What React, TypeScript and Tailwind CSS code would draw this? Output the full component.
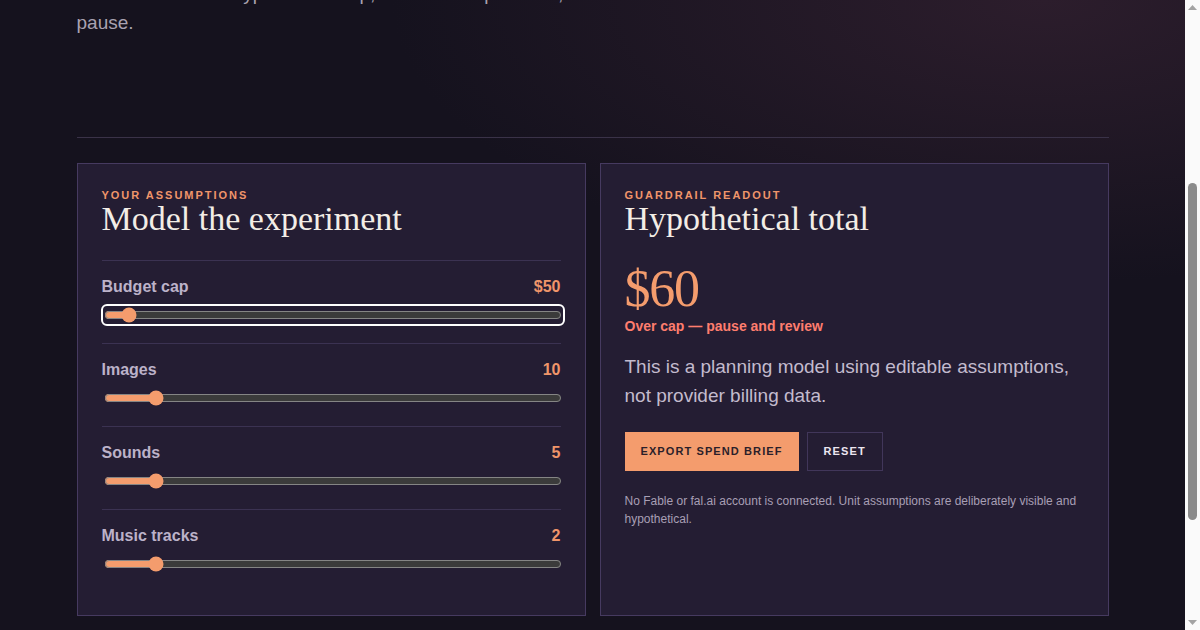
import { useLayoutEffect, useRef, useState } from 'react'

const SANS = { fontFamily: '"Liberation Sans", Arial, sans-serif' }
const SERIF = { fontFamily: '"Liberation Serif", "Times New Roman", serif' }

type Field = { key: string; label: string; min: number; max: number; step: number; prefix?: string }

const FIELDS: Field[] = [
  { key: 'cap',    label: 'Budget cap',   min: 10, max: 1000, step: 10, prefix: '$' },
  { key: 'images', label: 'Images',       min: 0,  max: 100,  step: 1 },
  { key: 'sounds', label: 'Sounds',       min: 0,  max: 50,   step: 1 },
  { key: 'music',  label: 'Music tracks', min: 0,  max: 20,   step: 1 },
]

const DEFAULTS: Record<string, number> = { cap: 50, images: 10, sounds: 5, music: 2 }

// hypothetical unit costs
const UNIT = { images: 2, sounds: 4, music: 10 }

// classic light scrollbar, as the browser draws it in the picture
function Scrollbar() {
  return (
    <aside className="flex w-[15px] shrink-0 flex-col items-center bg-[#fafafa]">
      <div className="flex h-[15px] items-center justify-center">
        <svg width="9" height="5" viewBox="0 0 9 5"><path d="M4.5 0 9 5H0z" fill="#a3a3a3" /></svg>
      </div>
      <div className="h-[168px]" />
      <div className="h-[337px] w-[9px] rounded-full bg-[#8b8b8b]" />
      <div className="flex-1" />
      <div className="flex h-[15px] items-center justify-center">
        <svg width="9" height="5" viewBox="0 0 9 5"><path d="M0 0h9L4.5 5z" fill="#a3a3a3" /></svg>
      </div>
    </aside>
  )
}

export default function App() {
  const scroller = useRef<HTMLDivElement>(null)
  const rule = useRef<HTMLHRElement>(null)
  const firstSlider = useRef<HTMLInputElement>(null)
  const [vals, setVals] = useState(DEFAULTS)

  // page is shown scrolled down to the calculator, rule sits at y=137
  useLayoutEffect(() => {
    if (scroller.current && rule.current) {
      scroller.current.scrollTop = rule.current.offsetTop - 137
    }
    firstSlider.current?.focus({ preventScroll: true })
  }, [])

  const total = vals.images * UNIT.images + vals.sounds * UNIT.sounds + vals.music * UNIT.music
  const over = total > vals.cap

  return (
    <div className="flex h-screen" style={SANS}>
      <div
        ref={scroller}
        className="relative flex-1 overflow-y-auto bg-[#15121e] bg-[radial-gradient(ellipse_55%_45%_at_88%_0%,#2c1d2c_0%,rgba(21,18,30,0)_100%)] text-[#ece6f0] [scrollbar-width:none]"
      >
        {/* ─ hero ─ */}
        <header className="mx-auto w-[1032px] pt-[183px]">
          <p className="text-[11px] font-bold uppercase leading-[14px] tracking-[0.18em] text-[#f0956a]">Creative spend guardrail</p>
          <h1 className="mt-4 text-[56px] leading-[60px] text-[#f3ede6]" style={SERIF}>
            Price the experiment before it runs.
          </h1>
          <p className="mt-5 max-w-[690px] text-[19px] leading-[29px] text-[#a9a2b1]">
            Generative assets feel free one prompt at a time, then arrive as an
            <br />
            invisible bill. Set a hypothetical cap, count the experiment, and decide when to pause.
          </p>
        </header>

        <main className="mx-auto w-[1032px] pb-[110px]">
          <hr ref={rule} className="mt-[100px] border-0 border-t border-[#3a3248]" />

          <div className="mt-[25px] grid grid-cols-2 gap-[14px]">
            {/* ─ assumptions ─ */}
            <section className="border border-[#463a60] bg-[#241d33] px-6 pt-6 pb-[23px]">
              <p className="text-[11px] font-bold uppercase leading-[14px] tracking-[0.18em] text-[#f0956a]">Your assumptions</p>
              <h2 className="text-[34px] leading-[34px] text-[#f3ede6]" style={SERIF}>Model the experiment</h2>

              <div className="mt-6">
                {FIELDS.map((f, i) => (
                  <div key={f.key} className="border-t border-[#3b3252] pt-[14px] pb-5">
                    <div className="flex items-center justify-between text-base font-bold leading-6">
                      <span className="text-[#bcb2c9]">{f.label}</span>
                      <span className="text-[#f0956a]">{f.prefix}{vals[f.key]}</span>
                    </div>
                    <input
                      ref={i === 0 ? firstSlider : undefined}
                      type="range"
                      min={f.min}
                      max={f.max}
                      step={f.step}
                      value={vals[f.key]}
                      onChange={(e) => setVals({ ...vals, [f.key]: Number(e.target.value) })}
                      className="mt-2 ml-[2px] block w-[calc(100%-1px)] accent-[#f49c6d] [color-scheme:dark] focus:outline-2 focus:outline-offset-1 focus:outline-white rounded-[3px]"
                    />
                  </div>
                ))}
              </div>
            </section>

            {/* ─ readout ─ */}
            <section className="border border-[#463a60] bg-[#241d33] px-6 pt-6 pb-6">
              <p className="text-[11px] font-bold uppercase leading-[14px] tracking-[0.18em] text-[#f0956a]">Guardrail readout</p>
              <h2 className="text-[34px] leading-[34px] text-[#f3ede6]" style={SERIF}>Hypothetical total</h2>

              <p className="mt-[26px] text-[52px] leading-[54px] tracking-tight text-[#f49c6d]" style={SERIF}>${total}</p>
              <p className="text-sm font-bold leading-5 text-[#ff7d6e]">
                {over ? 'Over cap — pause and review' : 'Within cap — keep going'}
              </p>

              <p className="mt-4 text-[19px] leading-[29px] text-[#c3bbce]">
                This is a planning model using editable assumptions, not provider billing data.
              </p>

              <div className="mt-[22px] flex gap-2">
                <button
                  type="button"
                  className="h-[39px] bg-[#f49c6d] px-4 text-[11px] font-bold uppercase tracking-[0.1em] text-[#2b1f2a]"
                >
                  Export spend brief
                </button>
                <button
                  type="button"
                  onClick={() => setVals(DEFAULTS)}
                  className="h-[39px] border border-[#41365a] px-4 text-[11px] font-bold uppercase tracking-[0.1em] text-[#ece6f0]"
                >
                  Reset
                </button>
              </div>

              <p className="mt-[21px] text-xs leading-[18px] text-[#a89fb5]">
                No Fable or fal.ai account is connected. Unit assumptions are deliberately visible and hypothetical.
              </p>
            </section>
          </div>
        </main>

        <footer className="mx-auto w-[1032px] border-t border-[#3a3248] py-8 text-xs leading-4 text-[#8d849a]">
          Planning estimates only.
        </footer>
      </div>
      <Scrollbar />
    </div>
  )
}
